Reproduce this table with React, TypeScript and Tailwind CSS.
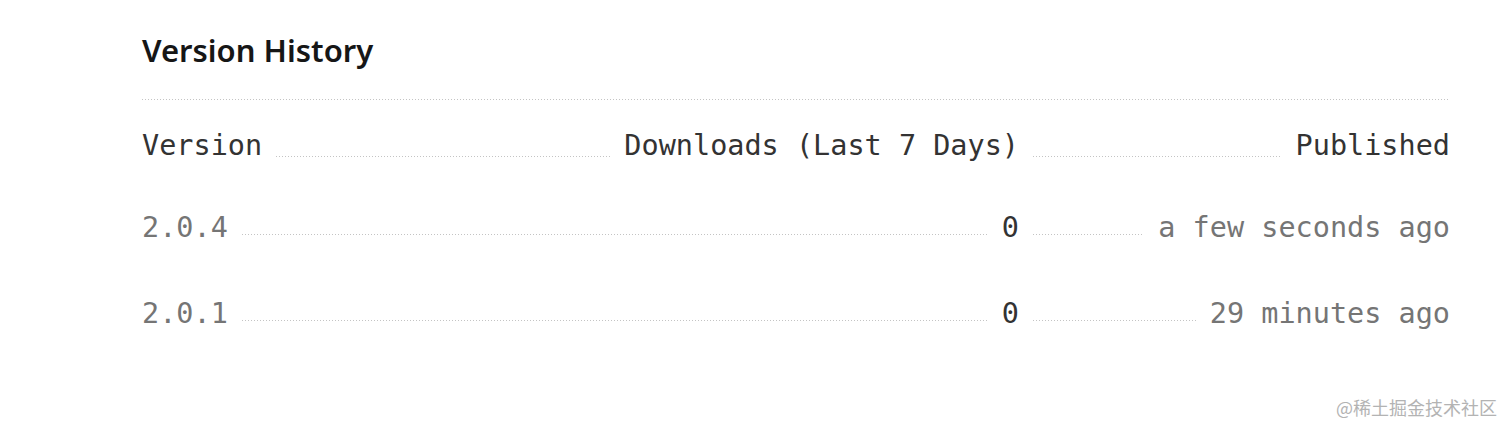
import React from "react";

type VersionRow = {
  version: string;
  downloads: number;
  published: string;
};

const versions: VersionRow[] = [
  { version: "2.0.4", downloads: 0, published: "a few seconds ago" },
  { version: "2.0.1", downloads: 0, published: "29 minutes ago" },
];

const mono = "font-['DejaVu_Sans_Mono','Liberation_Mono',monospace] text-[28.5px] leading-[40px] whitespace-nowrap";

const Leader: React.FC<{ top: string }> = ({ top }) => (
  <div
    className={`flex-1 h-px ${top} bg-[linear-gradient(to_right,#c4c4c4_1px,transparent_1px)] bg-[length:3px_1px] bg-repeat-x`}
  />
);

const App: React.FC = () => {
  return (
    <div className="relative w-[1512px] h-[432px] bg-white overflow-hidden">
      <div className="pl-[142px] pr-[62px] pt-[30px]">
        <h2 className="font-['Noto_Sans','Open_Sans',sans-serif] font-semibold text-[31px] leading-[40px] text-[#161616]">
          Version History
        </h2>

        <div className="mt-[29px] h-px bg-[linear-gradient(to_right,#c4c4c4_1px,transparent_1px)] bg-[length:3px_1px] bg-repeat-x" />

        {/* header */}
        <div className="mt-[26px] grid grid-cols-[877px_1fr] gap-x-[14px] text-[#333]">
          <div className="flex items-start gap-[14px]">
            <span className={mono}>Version</span>
            <Leader top="mt-[30px]" />
            <span className={mono}>Downloads (Last 7 Days)</span>
          </div>
          <div className="flex items-start gap-[14px]">
            <Leader top="mt-[30px]" />
            <span className={mono}>Published</span>
          </div>
        </div>

        {/* rows */}
        {versions.map((v, i) => (
          <div
            key={v.version}
            className={`grid grid-cols-[877px_1fr] gap-x-[14px] ${i === 0 ? "mt-[42px]" : "mt-[46px]"}`}
          >
            <div className="flex items-start gap-[14px]">
              <span className={`${mono} text-[#757575]`}>{v.version}</span>
              <Leader top="mt-[26px]" />
              <span className={`${mono} text-[#333]`}>{v.downloads}</span>
            </div>
            <div className="flex items-start gap-[14px]">
              <Leader top="mt-[26px]" />
              <span className={`${mono} text-[#757575]`}>{v.published}</span>
            </div>
          </div>
        ))}
      </div>

      <span className="absolute right-[15px] bottom-[13px] font-['Noto_Sans_CJK_SC',sans-serif] text-[18px] leading-[24px] text-[#b3b3b3]">
        @稀土掘金技术社区
      </span>
    </div>
  );
};

export default App;
